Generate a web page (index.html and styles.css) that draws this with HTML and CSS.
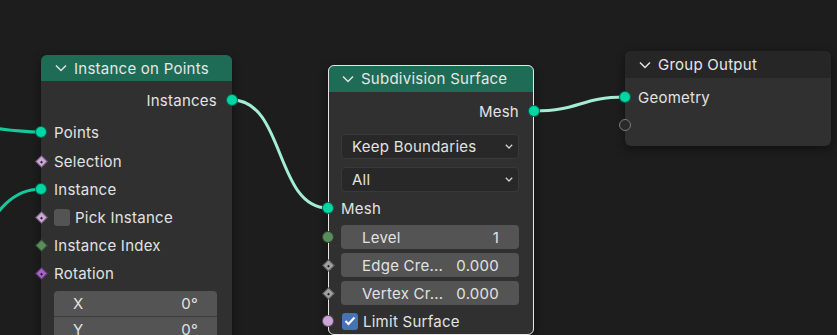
FILE: index.html
```html
<!DOCTYPE html>
<html lang="en">
  <head>
    <meta charset="UTF-8" />
    <meta name="viewport" content="width=device-width, initial-scale=1.0" />
    <title>Node Editor</title>
    <link rel="stylesheet" href="styles.css">
  </head>
  <body>
    <div class="canvas">
      <svg class="links" width="837" height="335" viewBox="0 0 837 335">
        <path class="link" d="M -60 124 C -10 124, 0 132, 41 132" />
        <path class="link" d="M -90 290 C -20 290, -20 189, 41 189" />
        <path class="link hi" d="M 232 100 C 285 100, 275 208, 328 208" />
        <path class="link hi" d="M 534 111 C 580 111, 580 97, 625 97" />
      </svg>

      <div class="node node-iop">
        <div class="node-header">
          <svg class="chev" width="12" height="8" viewBox="0 0 12 8"><polyline points="1,1.5 6,6.5 11,1.5" /></svg>
          <span>Instance on Points</span>
        </div>
        <div class="node-body">
          <div class="row out">
            <span>Instances</span>
            <i class="sock circle geo right"></i>
          </div>
          <div class="row gap4">
            <i class="sock circle geo"></i>
            <span>Points</span>
          </div>
          <div class="row gap1">
            <i class="sock diamond bool dot"></i>
            <span>Selection</span>
          </div>
          <div class="row">
            <i class="sock circle geo"></i>
            <span>Instance</span>
          </div>
          <div class="row">
            <i class="sock diamond bool dot"></i>
            <span class="checkbox"></span>
            <span>Pick Instance</span>
          </div>
          <div class="row">
            <i class="sock diamond int"></i>
            <span>Instance Index</span>
          </div>
          <div class="row">
            <i class="sock diamond rot dot"></i>
            <span>Rotation</span>
          </div>
          <div class="vector">
            <div class="vrow"><span>X</span><span>0°</span></div>
            <div class="vrow"><span>Y</span><span>0°</span></div>
            <div class="vrow"><span>Z</span><span>0°</span></div>
          </div>
        </div>
      </div>

      <div class="node node-subd selected">
        <div class="node-header">
          <svg class="chev" width="12" height="8" viewBox="0 0 12 8"><polyline points="1,1.5 6,6.5 11,1.5" /></svg>
          <span>Subdivision Surface</span>
        </div>
        <div class="node-body">
          <div class="row out">
            <span>Mesh</span>
            <i class="sock circle geo right"></i>
          </div>
          <div class="dropdown first">
            <span>Keep Boundaries</span>
            <svg width="8" height="5" viewBox="0 0 8 5"><polyline points="0.8,0.8 4,4 7.2,0.8" /></svg>
          </div>
          <div class="dropdown">
            <span>All</span>
            <svg width="8" height="5" viewBox="0 0 8 5"><polyline points="0.8,0.8 4,4 7.2,0.8" /></svg>
          </div>
          <div class="row mesh-in">
            <i class="sock circle geo"></i>
            <span>Mesh</span>
          </div>
          <div class="row field-row first-field">
            <i class="sock circle intc"></i>
            <div class="field"><span>Level</span><span>1</span></div>
          </div>
          <div class="row field-row">
            <i class="sock diamond float dot"></i>
            <div class="field"><span>Edge Cre...</span><span>0.000</span></div>
          </div>
          <div class="row field-row">
            <i class="sock diamond float dot"></i>
            <div class="field"><span>Vertex Cr...</span><span>0.000</span></div>
          </div>
          <div class="row limit">
            <i class="sock circle boolc"></i>
            <span class="checkbox checked">
              <svg width="12" height="10" viewBox="0 0 12 10"><polyline points="1.5,5 4.5,8 10.5,1.5" /></svg>
            </span>
            <span>Limit Surface</span>
          </div>
        </div>
      </div>

      <div class="node node-out">
        <div class="node-header">
          <svg class="chev" width="12" height="8" viewBox="0 0 12 8"><polyline points="1,1.5 6,6.5 11,1.5" /></svg>
          <span>Group Output</span>
        </div>
        <div class="node-body">
          <div class="row">
            <i class="sock circle geo"></i>
            <span>Geometry</span>
          </div>
          <div class="row">
            <i class="sock circle empty"></i>
          </div>
        </div>
      </div>
    </div>
  </body>
</html>
```

FILE: styles.css
```css
body {
  margin: 0;
  background-color: #1d1d1d;
  font-family: Inter, "Noto Sans", sans-serif;
  font-size: 15px;
  letter-spacing: 0.25px;
  color: #e2e2e2;
}

.canvas {
  position: relative;
  width: 837px;
  height: 335px;
  overflow: hidden;
  background-color: #1d1d1d;
}

.links {
  position: absolute;
  left: 0;
  top: 0;
}

.link {
  fill: none;
  stroke: #19c79c;
  stroke-width: 3;
}

.link.hi {
  stroke: #a4ecd5;
}

/* nodes */
.node {
  position: absolute;
  background-color: #303030;
  border-radius: 6px;
  box-shadow: 0 3px 10px rgba(0, 0, 0, 0.45);
}

.node-iop {
  left: 41px;
  top: 55px;
  width: 191px;
}

.node-subd {
  left: 328px;
  top: 65px;
  width: 206px;
}

.node-out {
  left: 625px;
  top: 51px;
  width: 206px;
}

.node.selected::after {
  content: "";
  position: absolute;
  left: 0;
  top: 0;
  right: 0;
  bottom: 0;
  border: 1px solid #e6e6e6;
  border-radius: 6px;
  pointer-events: none;
}

.node-header {
  display: flex;
  align-items: center;
  gap: 7px;
  height: 26px;
  padding-left: 14px;
  background-color: #1e6c56;
  border-radius: 6px 6px 0 0;
  color: #e6e6e6;
}

.node-subd .node-header {
  height: 27px;
}

.node-out .node-header {
  height: 27px;
  background-color: #262626;
}

.chev polyline {
  fill: none;
  stroke: #e0e0e0;
  stroke-width: 1.5;
}

.node-body {
  padding-top: 5px;
}

.node-out .node-body {
  padding-bottom: 7px;
}

/* rows & sockets */
.row {
  position: relative;
  display: flex;
  align-items: center;
  gap: 5px;
  height: 28px;
  padding: 0 15px 0 13px;
}

.row.out {
  justify-content: flex-end;
}

.row.gap4 {
  margin-top: 4px;
}

.row.gap1 {
  margin-top: 1px;
}

.sock {
  position: absolute;
  left: -6px;
  top: 50%;
  width: 12px;
  height: 12px;
  margin-top: -6px;
  box-sizing: border-box;
  z-index: 2;
}

.sock.right {
  left: auto;
  right: -6px;
}

.sock.circle {
  border-radius: 50%;
  border: 1px solid rgba(0, 0, 0, 0.5);
}

.sock.diamond {
  left: -4px;
  width: 9px;
  height: 9px;
  margin-top: -4.5px;
  transform: rotate(45deg);
  border: 1px solid rgba(0, 0, 0, 0.45);
}

.sock.dot::after {
  content: "";
  position: absolute;
  left: 2.5px;
  top: 2.5px;
  width: 2px;
  height: 2px;
  background-color: #202020;
}

.geo { background-color: #00d6a3; }
.bool { background-color: #cca6d6; }
.boolc { background-color: #cca6d6; }
.int { background-color: #5a8c5c; }
.intc { background-color: #5a8c5c; }
.rot { background-color: #a562c7; }
.float { background-color: #a1a1a1; }

.sock.empty {
  background-color: #2a2a2a;
  border: 1px solid #7a7a7a;
}

.checkbox {
  display: flex;
  align-items: center;
  justify-content: center;
  width: 16px;
  height: 17px;
  border-radius: 3px;
  background-color: #545454;
}

.checkbox.checked {
  background-color: #4772b3;
}

.checkbox svg polyline {
  fill: none;
  stroke: #ffffff;
  stroke-width: 2;
}

/* vector field */
.vector {
  margin: 4px 15px 0 13px;
  border-radius: 4px;
  overflow: hidden;
}

.vrow {
  display: flex;
  justify-content: space-between;
  align-items: center;
  height: 26px;
  padding: 0 19px 0 19px;
  background-color: #545454;
  border-bottom: 1px solid #3c3c3c;
  box-sizing: border-box;
}

/* subdivision widgets */
.dropdown {
  display: flex;
  justify-content: space-between;
  align-items: center;
  height: 25px;
  margin: 8px 15px 0 13px;
  padding: 0 5px 0 10px;
  background-color: #282828;
  border: 1px solid #393939;
  border-radius: 4px;
  box-sizing: border-box;
}

.dropdown.first {
  margin-top: 9px;
}

.dropdown svg polyline {
  fill: none;
  stroke: #d0d0d0;
  stroke-width: 1.3;
}

.row.mesh-in {
  margin-top: 2px;
}

.row.field-row {
  height: 24px;
  margin-top: 4px;
}

.row.first-field {
  margin-top: 3px;
}

.field {
  flex: 1;
  display: flex;
  justify-content: space-between;
  align-items: center;
  height: 24px;
  padding: 0 20px 0 21px;
  background-color: #545454;
  border-radius: 4px;
}

.row.limit {
  margin-top: 2px;
  padding-left: 14px;
}
```
